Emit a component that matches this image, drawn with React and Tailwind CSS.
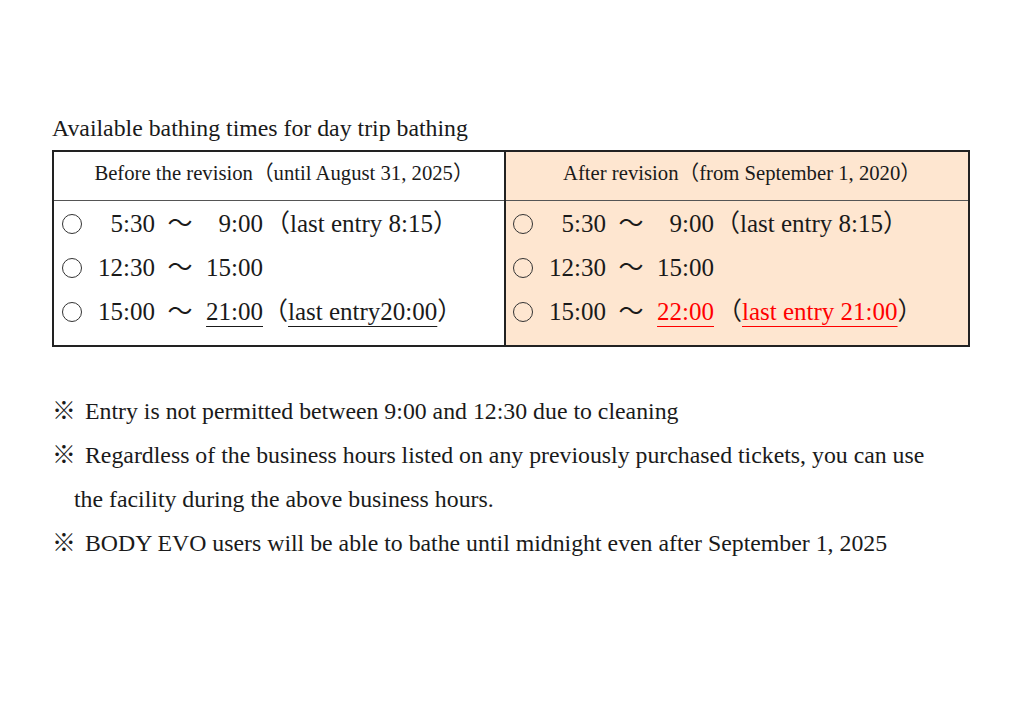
import React from "react";

const FONT = { fontFamily: '"Liberation Serif", "Noto Sans CJK JP", serif' };

function Row({ t1, t2, rest }) {
  return (
    <div className="flex items-center h-[44px] leading-[44px] whitespace-nowrap">
      <span className="w-[26px] flex items-center">
        <span className="inline-block w-[20px] h-[20px] rounded-full border-[1.5px] border-[#333]"></span>
      </span>
      <span className="inline-block w-[67px] text-right">{t1}</span>
      <span className="inline-block w-[50px] text-center">～</span>
      <span className="inline-block w-[58px] text-right">{t2}</span>
      {rest}
    </div>
  );
}

export default function App() {
  return (
    <div className="w-[1024px] h-[726px] bg-white text-[#1a1a1a] pl-[52px] pt-[114px]" style={FONT}>
      <div className="text-[23.8px] leading-[28px]">Available bathing times for day trip bathing</div>

      <div className="mt-[8px] w-[918px] flex border-2 border-[#222] text-[25px]">
        <div className="w-[452px] border-r-2 border-[#222] bg-white">
          <div className="h-[49px] pb-[5px] pl-[10px] flex items-center justify-center border-b border-[#555] text-[20.7px] leading-none">
            Before the revision（until August 31, 2025）
          </div>
          <div className="pl-[8px] pb-[11px] pt-[1px]">
            <Row t1="5:30" t2="9:00" rest={<span className="ml-[2px]">（last entry 8:15）</span>} />
            <Row t1="12:30" t2="15:00" />
            <Row
              t1="15:00"
              t2={<span className="underline underline-offset-[6px] decoration-1">21:00</span>}
              rest={
                <span className="ml-[0px]">
                  （<span className="underline underline-offset-[6px] decoration-1">last entry20:00</span>）
                </span>
              }
            />
          </div>
        </div>
        <div className="flex-1 bg-[#fee6d0]">
          <div className="h-[49px] pb-[5px] pl-[10px] flex items-center justify-center border-b border-[#555] text-[20.7px] leading-none">
            After revision（from September 1, 2020）
          </div>
          <div className="pl-[7px] pb-[11px] pt-[1px]">
            <Row t1="5:30" t2="9:00" rest={<span className="ml-[1px]">（last entry 8:15）</span>} />
            <Row t1="12:30" t2="15:00" />
            <Row
              t1="15:00"
              t2={<span className="text-[#ff0000] underline underline-offset-[6px] decoration-1">22:00</span>}
              rest={
                <span className="ml-[3px]">
                  （<span className="text-[#ff0000] underline underline-offset-[6px] decoration-1">last entry 21:00</span>）
                </span>
              }
            />
          </div>
        </div>
      </div>

      <div className="mt-[42px] text-[23.8px] leading-[44px]">
        <div className="flex whitespace-nowrap">
          <span className="inline-block w-[33px]">※</span>
          <span>Entry is not permitted between 9:00 and 12:30 due to cleaning</span>
        </div>
        <div className="flex whitespace-nowrap">
          <span className="inline-block w-[33px]">※</span>
          <span>Regardless of the business hours listed on any previously purchased tickets, you can use</span>
        </div>
        <div className="pl-[22px] whitespace-nowrap">the facility during the above business hours.</div>
        <div className="flex whitespace-nowrap">
          <span className="inline-block w-[33px]">※</span>
          <span>BODY EVO users will be able to bathe until midnight even after September 1, 2025</span>
        </div>
      </div>
    </div>
  );
}
